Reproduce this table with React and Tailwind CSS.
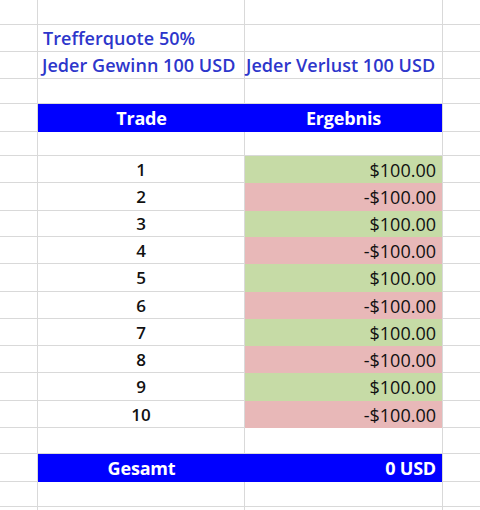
import React from "react";

const line = "border-[#d9d9d9]";
const blue = "bg-[#0000ff]";
const font = { fontFamily: "'Open Sans', Lato, sans-serif" };

// heights of each spreadsheet row (bottom border included)
const heights = [25, 27, 27, 25, 28, 24, 27, 28, 26, 27, 28, 27, 27, 27, 28, 27, 26, 28, 25, 20];

function Cell({ w, h, className = "", children }) {
  return (
    <div
      className={`shrink-0 border-r border-b ${line} flex items-center ${className}`}
      style={{ width: w, height: h }}
    >
      {children}
    </div>
  );
}

function Row({ h, b, c, bClass = "", cClass = "" }) {
  return (
    <div className="flex">
      <Cell w={38} h={h} />
      <Cell w={207} h={h} className={bClass}>{b}</Cell>
      <Cell w={198} h={h} className={cClass}>{c}</Cell>
      <div className={`flex-1 border-b ${line}`} style={{ height: h }} />
    </div>
  );
}

function Banner({ h, left, right, center }) {
  return (
    <div className="flex">
      <Cell w={38} h={h} />
      <div
        className={`shrink-0 flex items-center ${blue} border-r ${line} text-white font-bold text-[18px] tracking-[-0.2px]`}
        style={{ width: 405, height: h }}
      >
        <div className="w-[207px] text-center">{left}</div>
        <div className={`flex-1 ${center ? "text-center" : "text-right pr-[6px]"}`}>{right}</div>
      </div>
      <div className={`flex-1 border-b ${line}`} style={{ height: h }} />
    </div>
  );
}

const title = "text-[18px] font-semibold text-[#2d36cb] whitespace-nowrap tracking-[0.05px]";

export default function App() {
  const trades = [1, 2, 3, 4, 5, 6, 7, 8, 9, 10];
  return (
    <div className="w-[480px] h-[510px] overflow-hidden bg-white" style={font}>
      <Row h={heights[0]} />
      <Row h={heights[1]} b={<span className={`pl-[5px] ${title}`}>Trefferquote 50%</span>} />
      <Row
        h={heights[2]}
        b={<span className={`pl-[4px] ${title}`}>Jeder Gewinn 100 USD</span>}
        c={<span className={`pl-[1px] ${title}`}>Jeder Verlust 100 USD</span>}
      />
      <Row h={heights[3]} />
      <Banner h={heights[4]} left="Trade" right="Ergebnis" center />
      <Row h={heights[5]} />
      {trades.map((t, i) => {
        const win = t % 2 === 1;
        return (
          <Row
            key={t}
            h={heights[6 + i]}
            bClass="justify-center"
            cClass={`justify-end pr-[6px] border-b-0 ${win ? "bg-[#c6dba6]" : "bg-[#e8b8b8]"}`}
            b={<span className="text-[17px] font-semibold text-[#111] pt-[1px]">{t}</span>}
            c={<span className="text-[18px] font-medium text-[#111] pt-[1px]">{win ? "$100.00" : "-$100.00"}</span>}
          />
        );
      })}
      <Row h={heights[16]} />
      <Banner h={heights[17]} left="Gesamt" right="0 USD" />
      <Row h={heights[18]} />
      <Row h={heights[19]} />
    </div>
  );
}
